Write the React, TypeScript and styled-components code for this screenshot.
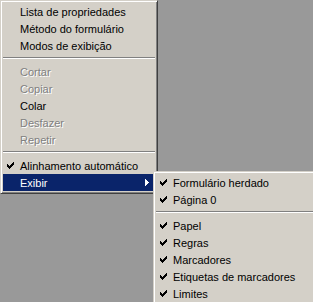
import React from 'react';
import styled, { createGlobalStyle } from 'styled-components';

const GlobalStyle = createGlobalStyle`
    html, body {
        margin: 0;
        padding: 0;
        background: #999999;
    }
    body {
        font-family: "Liberation Sans", Arial, sans-serif;
        font-size: 11px;
        -webkit-font-smoothing: none;
    }
`;

const Desktop = styled.div`
    position: relative;
    width: 313px;
    height: 302px;
    overflow: hidden;
    background: #999999;
`;

// popup menus lie over the desktop, so they keep their own coordinates
const Menu = styled.div<{ $left?: number; $top?: number; $width: number; $sub?: boolean }>`
    position: absolute;
    left: ${p => p.$left || 0}px;
    top: ${p => p.$top || 0}px;
    width: ${p => p.$width}px;
    box-sizing: border-box;
    display: flex;
    flex-direction: column;
    background: #d4d0c8;
    border-top: 1px solid #d4d0c8;
    border-left: 1px solid #d4d0c8;
    border-right: 1px solid #404040;
    border-bottom: 1px solid #404040;
    box-shadow: inset 1px 1px 0 #ffffff, inset -1px -1px 0 #808080;
    padding: 2px;
    z-index: ${p => (p.$sub ? 2 : 1)};
`;

const Item = styled.div<{ $active?: boolean; $disabled?: boolean }>`
    display: flex;
    align-items: center;
    height: 17px;
    color: ${p => (p.$active ? '#ffffff' : p.$disabled ? '#808080' : '#000000')};
    background: ${p => (p.$active ? '#0a246a' : 'transparent')};
    text-shadow: ${p => (p.$disabled ? '1px 1px 0 #ffffff' : 'none')};
    white-space: nowrap;
`;

const CheckSlot = styled.span`
    display: flex;
    align-items: center;
    width: 17px;
    flex: none;
    padding-left: 4px;
    box-sizing: border-box;
`;

const Label = styled.span`
    flex: 1;
`;

const Pixels = styled.svg`
    display: block;
    shape-rendering: crispEdges;
`;

const ArrowSlot = styled.span`
    display: flex;
    margin-right: 6px;
`;

const Separator = styled.div`
    height: 9px;
    box-sizing: border-box;
    padding-top: 3px;

    &::before {
        content: '';
        display: block;
        height: 1px;
        background: #808080;
        border-bottom: 1px solid #ffffff;
    }
`;

const checkRows = ['......X', '.....XX', 'X...XXX', 'XX.XXX.', 'XXXXX..', '.XXX...', '..X....'];

const CheckMark = ({ color }: { color: string }) => (
    <Pixels width="7" height="7" viewBox="0 0 7 7">
        {checkRows.map((row, y) =>
            row.split('').map((c, x) =>
                c === 'X' ? <rect key={x + '-' + y} x={x} y={y} width="1" height="1" fill={color} /> : null
            )
        )}
    </Pixels>
);

const SubArrow = () => (
    <Pixels width="4" height="7" viewBox="0 0 4 7">
        <rect x="0" y="0" width="1" height="7" fill="#ffffff" />
        <rect x="1" y="1" width="1" height="5" fill="#ffffff" />
        <rect x="2" y="2" width="1" height="3" fill="#ffffff" />
        <rect x="3" y="3" width="1" height="1" fill="#ffffff" />
    </Pixels>
);

interface entry {
    label?: string,
    checked?: boolean,
    disabled?: boolean,
    active?: boolean,
    sub?: boolean,
    sep?: boolean
}

const mainItems: entry[] = [
    { label: 'Lista de propriedades' },
    { label: 'Método do formulário' },
    { label: 'Modos de exibição' },
    { sep: true },
    { label: 'Cortar', disabled: true },
    { label: 'Copiar', disabled: true },
    { label: 'Colar' },
    { label: 'Desfazer', disabled: true },
    { label: 'Repetir', disabled: true },
    { sep: true },
    { label: 'Alinhamento automático', checked: true },
    { label: 'Exibir', active: true, sub: true },
];

const subItems: entry[] = [
    { label: 'Formulário herdado', checked: true },
    { label: 'Página 0', checked: true },
    { sep: true },
    { label: 'Papel', checked: true },
    { label: 'Regras', checked: true },
    { label: 'Marcadores', checked: true },
    { label: 'Etiquetas de marcadores', checked: true },
    { label: 'Limites', checked: true },
];

const renderItems = (items: entry[]) =>
    items.map((it, i) =>
        it.sep ? (
            <Separator key={i} />
        ) : (
            <Item key={i} $active={it.active} $disabled={it.disabled}>
                <CheckSlot>{it.checked ? <CheckMark color={it.active ? '#ffffff' : '#000000'} /> : null}</CheckSlot>
                <Label>{it.label}</Label>
                {it.sub ? (
                    <ArrowSlot>
                        <SubArrow />
                    </ArrowSlot>
                ) : null}
            </Item>
        )
    );

export default function App() {
    return (
        <Desktop>
            <GlobalStyle />
            <Menu $width={158}>{renderItems(mainItems)}</Menu>
            <Menu $left={153} $top={171} $width={175} $sub>
                {renderItems(subItems)}
            </Menu>
        </Desktop>
    );
}
